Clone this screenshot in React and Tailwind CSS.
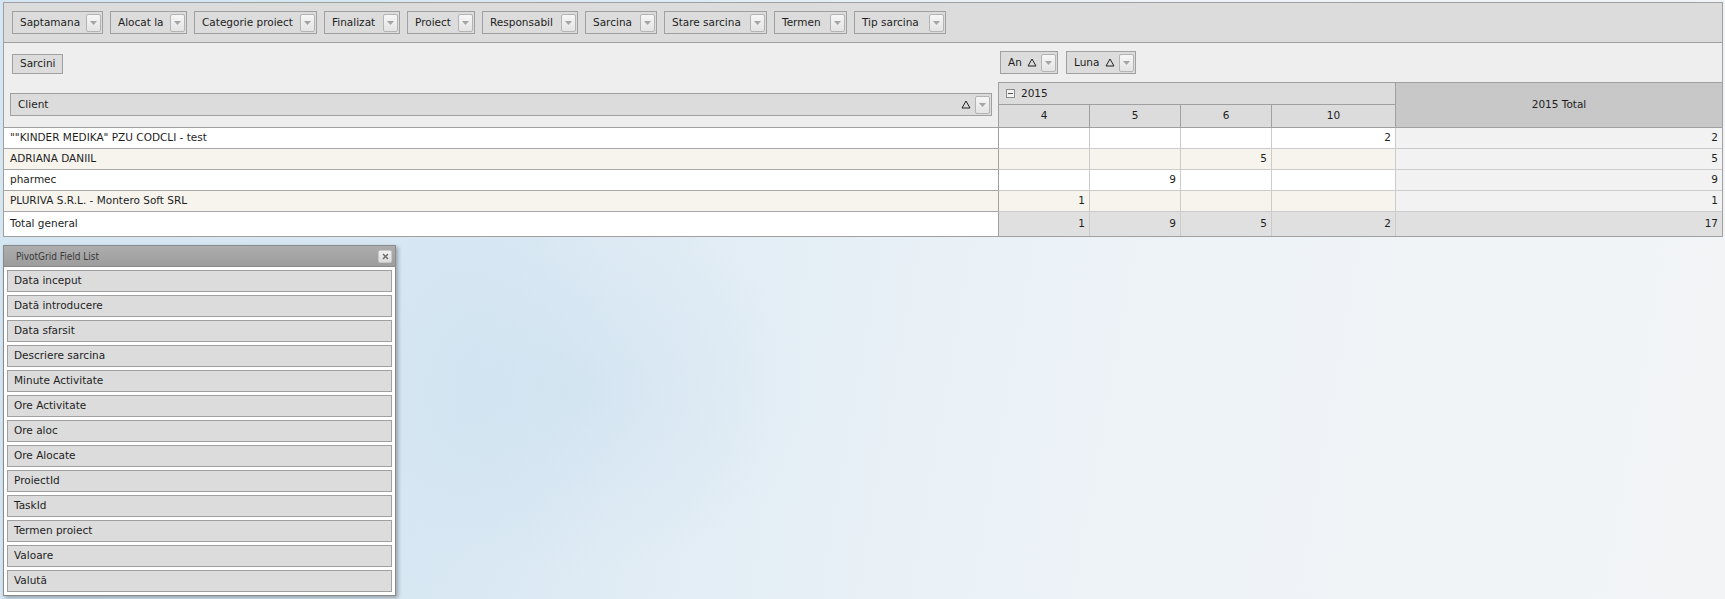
import React from "react";

function Caret() {
  return (
    <span className="w-[15px] h-[18px] border border-[#b4b4b4] rounded-[2px] bg-[linear-gradient(#f6f6f6,#e4e4e4)] flex items-center justify-center shrink-0">
      <svg width="7" height="4" viewBox="0 0 7 4">
        <path d="M0 0H7L3.5 4Z" fill="#a4a4a4" />
      </svg>
    </span>
  );
}

function SortUp() {
  return (
    <svg width="10" height="9" viewBox="0 0 10 9" className="shrink-0">
      <path d="M5 1L9 8H1Z" fill="none" stroke="#222" strokeWidth="1" />
    </svg>
  );
}

function FieldBtn({ label, w, h = "h-[23px]", sort, caret = true }) {
  return (
    <div className={`${w} ${h} border border-[#a0a0a0] bg-[#dcdcdc] flex items-center pl-[7px] pr-[1px] shrink-0`}>
      <span className="flex-1 whitespace-nowrap leading-none">{label}</span>
      {sort && (
        <span className="mr-[4px] flex items-center">
          <SortUp />
        </span>
      )}
      {caret && <Caret />}
    </div>
  );
}

const filters = [
  ["Saptamana", "w-[91px]"],
  ["Alocat la", "w-[77px]"],
  ["Categorie proiect", "w-[123px]"],
  ["Finalizat", "w-[76px]"],
  ["Proiect", "w-[68px]"],
  ["Responsabil", "w-[96px]"],
  ["Sarcina", "w-[72px]"],
  ["Stare sarcina", "w-[103px]"],
  ["Termen", "w-[73px]"],
  ["Tip sarcina", "w-[92px]"],
];

const monthW = ["w-[91px]", "w-[91px]", "w-[91px]", "w-[124px]"];

const rows = [
  { name: '""KINDER MEDIKA" PZU CODCLI - test', v: ["", "", "", "2"], t: "2", alt: false },
  { name: "ADRIANA DANIIL", v: ["", "", "5", ""], t: "5", alt: true },
  { name: "pharmec", v: ["", "9", "", ""], t: "9", alt: false },
  { name: "PLURIVA S.R.L. - Montero Soft SRL", v: ["1", "", "", ""], t: "1", alt: true },
];

const fields = [
  "Data inceput",
  "Dată introducere",
  "Data sfarsit",
  "Descriere sarcina",
  "Minute Activitate",
  "Ore Activitate",
  "Ore aloc",
  "Ore Alocate",
  "ProiectId",
  "TaskId",
  "Termen proiect",
  "Valoare",
  "Valută",
];

export default function App() {
  return (
    <div className="w-[1725px] h-[599px] overflow-hidden font-['DejaVu_Sans',sans-serif] text-[10.5px] text-[#1e1e1e] bg-[radial-gradient(ellipse_230px_180px_at_580px_390px,rgba(200,222,239,0.45),transparent),radial-gradient(ellipse_150px_300px_at_470px_400px,rgba(204,225,241,0.35),transparent),linear-gradient(100deg,#d4e6f2_0%,#d9e8f3_28%,#e2edf5_42%,#ebf2f7_58%,#f0f4f7_80%,#f2f4f6_100%)]">
      {/* Pivot grid panel */}
      <div className="mt-[2px] ml-[3px] w-[1720px] border border-[#a0a0a0] bg-[#eeeeee]">
        {/* filter area */}
        <div className="h-[40px] border-b border-[#a0a0a0] bg-[#dcdcdc] flex items-start gap-[7px] pl-[8px] pt-[8px]">
          {filters.map(([l, w]) => (
            <FieldBtn key={l} label={l} w={w} />
          ))}
        </div>

        {/* data + column field area */}
        <div className="h-[39px] flex">
          <div className="w-[994px] pl-[8px] pt-[11px] shrink-0">
            <div className="w-[51px] h-[20px] border border-[#a0a0a0] bg-[#dcdcdc] flex items-center pl-[7px]">Sarcini</div>
          </div>
          <div className="pl-[2px] pt-[8px] flex gap-[8px]">
            <FieldBtn label="An" w="w-[58px]" sort />
            <FieldBtn label="Luna" w="w-[70px]" sort />
          </div>
        </div>

        {/* header area */}
        <div className="h-[46px] flex border-b border-[#a0a0a0]">
          <div className="w-[994px] shrink-0 flex items-center pl-[6px]">
            <FieldBtn label="Client" w="w-[982px]" sort />
          </div>
          <div className="flex">
            <div className="w-[397px] flex flex-col">
              <div className="h-[22px] border-t border-l border-[#a0a0a0] bg-[#dcdcdc] flex items-center pl-[7px] gap-[6px]">
                <svg width="9" height="9" viewBox="0 0 9 9">
                  <rect x="0.5" y="0.5" width="8" height="8" fill="#f2f2f2" stroke="#8c8c8c" />
                  <path d="M2 4.5H7" stroke="#555" strokeWidth="1" />
                </svg>
                <span>2015</span>
              </div>
              <div className="h-[23px] flex border-t border-[#a0a0a0]">
                {["4", "5", "6", "10"].map((m, i) => (
                  <div key={m} className={`${monthW[i]} h-full border-l border-[#a0a0a0] bg-[#dcdcdc] flex items-center justify-center`}>
                    {m}
                  </div>
                ))}
              </div>
            </div>
            <div className="w-[327px] h-[45px] border-t border-l border-[#a0a0a0] bg-[#c8c8c8] flex items-center justify-center">
              2015 Total
            </div>
          </div>
        </div>

        {/* data rows */}
        {rows.map((r) => (
          <div key={r.name} className={`h-[21px] flex ${r.alt ? "bg-[#f7f4ee]" : "bg-white"}`}>
            <div className="w-[994px] shrink-0 border-b border-[#a8a8a8] flex items-center pl-[6px] whitespace-nowrap">{r.name}</div>
            {r.v.map((v, i) => (
              <div
                key={i}
                className={`${monthW[i]} border-b border-l ${i === 0 ? "border-l-[#a0a0a0]" : "border-l-[#cbcbcb]"} border-b-[#cbcbcb] flex items-center justify-end pr-[4px]`}
              >
                {v}
              </div>
            ))}
            <div className="w-[327px] border-b border-l border-[#cbcbcb] bg-[#f2f2f2] flex items-center justify-end pr-[4px]">{r.t}</div>
          </div>
        ))}
        <div className="h-[24px] flex">
          <div className="w-[994px] shrink-0 bg-white flex items-center pl-[6px]">Total general</div>
          {["1", "9", "5", "2"].map((v, i) => (
            <div
              key={i}
              className={`${monthW[i]} border-l ${i === 0 ? "border-[#a0a0a0]" : "border-[#cbcbcb]"} bg-[#e0e0e0] flex items-center justify-end pr-[4px]`}
            >
              {v}
            </div>
          ))}
          <div className="w-[327px] border-l border-[#cbcbcb] bg-[#e0e0e0] flex items-center justify-end pr-[4px]">17</div>
        </div>
      </div>

      {/* Field list */}
      <div className="mt-[8px] ml-[3px] w-[393px] border border-[#8a8a8a] bg-white shadow-[2px_2px_4px_rgba(0,0,0,0.3)]">
        <div className="h-[21px] border-b border-[#8a8a8a] bg-[linear-gradient(#adadad,#9d9d9d)] flex items-center justify-between pl-[12px] pr-[3px]">
          <span className="font-['DejaVu_Sans_Condensed','Liberation_Sans',sans-serif] text-[10px] text-[#3a3a3a]">PivotGrid Field List</span>
          <span className="w-[14px] h-[13px] rounded-[2px] border border-[#c8c8c8] bg-[linear-gradient(#f2f2f2,#dcdcdc)] flex items-center justify-center">
            <svg width="7" height="7" viewBox="0 0 7 7">
              <path d="M1 1L6 6M6 1L1 6" stroke="#6a6a6a" strokeWidth="1.4" />
            </svg>
          </span>
        </div>
        <div className="flex flex-col gap-[3px] px-[3px] pt-[3px] pb-[3px]">
          {fields.map((f) => (
            <div key={f} className="h-[22px] border border-[#a0a0a0] bg-[#dcdcdc] flex items-center pl-[6px]">
              {f}
            </div>
          ))}
        </div>
      </div>
    </div>
  );
}
